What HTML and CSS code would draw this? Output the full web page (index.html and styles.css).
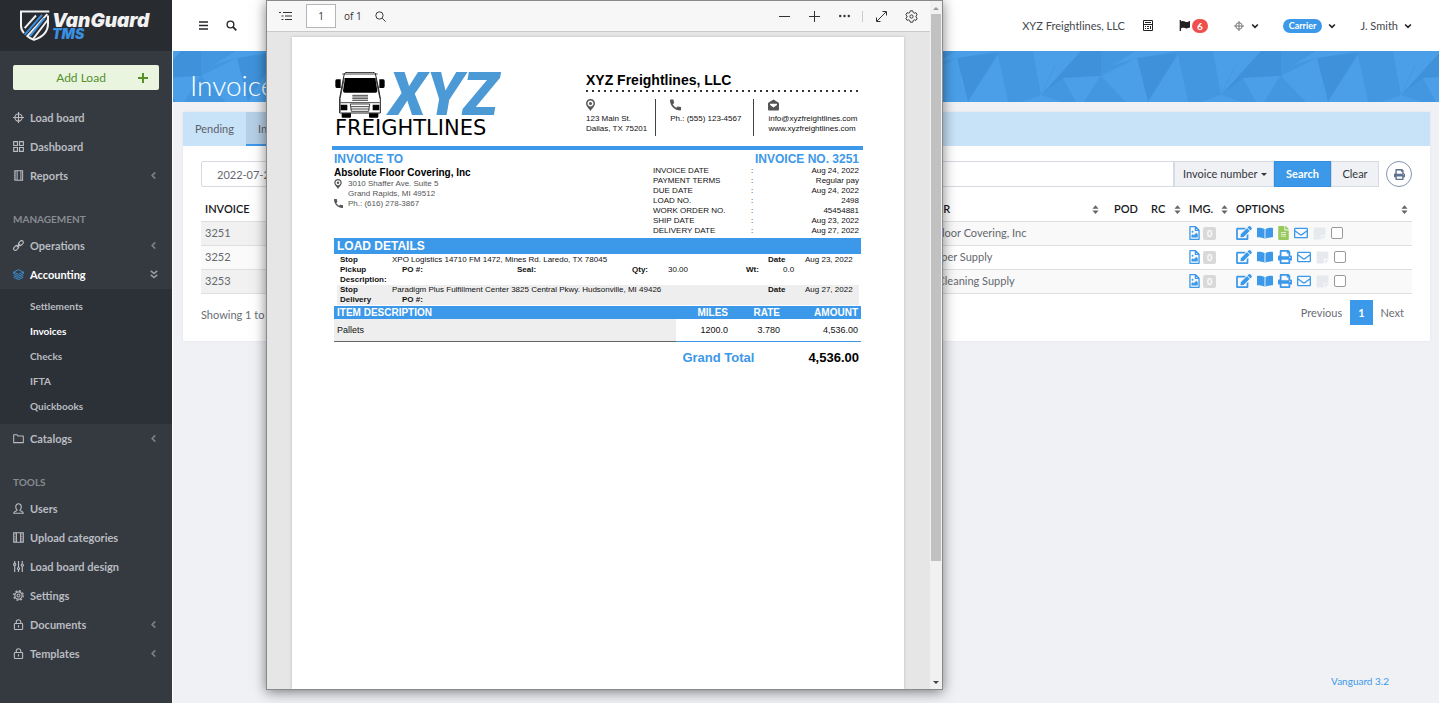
FILE: index.html
```html
<!DOCTYPE html>
<html lang="en">
<head>
<meta charset="utf-8">
<title>VanGuard TMS - Invoices</title>
<link rel="stylesheet" href="styles.css">
</head>
<body>
<svg class="defs" aria-hidden="true">
  <symbol id="target" viewBox="0 0 16 16"><g fill="none" stroke="currentColor" stroke-width="1.6"><circle cx="8" cy="8" r="5.2"/><path d="M8 0v16M0 8h16"/></g></symbol>
  <symbol id="grid" viewBox="0 0 16 16"><path fill="none" stroke="currentColor" stroke-width="1.7" d="M1 1h5.5v5.5H1zM9.5 1H15v5.5H9.500zM1 9.500h5.500V15H1zM9.500 9.500H15V15H9.500z"/></symbol>
  <symbol id="book" viewBox="0 0 16 16"><path fill="none" stroke="currentColor" stroke-width="1.5" d="M3 1h11v14H3zM6 1v14M11.500 1v14"/><path stroke="currentColor" stroke-width="1.300" stroke-dasharray="1.500 1.500" d="M2 1v14"/></symbol>
  <symbol id="link" viewBox="0 0 16 16"><g fill="none" stroke="currentColor" stroke-width="1.700"><rect x="7.500" y="2" width="8" height="5" rx="2.500" transform="rotate(-45 11.500 4.500)"/><rect x=".5" y="9" width="8" height="5" rx="2.500" transform="rotate(-45 4.500 11.500)"/><path d="M5.500 10.500l5-5"/></g></symbol>
  <symbol id="layers" viewBox="0 0 16 16"><path fill="none" stroke="currentColor" stroke-width="1.200" stroke-linejoin="round" d="M8 1l7 3.400-7 3.400-7-3.400zM1 7l7 3.400L15 7M1 9.500l7 3.400 7-3.400M1 12l7 3.400 7-3.400M1 4.400V7M15 4.400V7"/></symbol>
  <symbol id="folder" viewBox="0 0 16 16"><path fill="none" stroke="currentColor" stroke-width="1.500" stroke-linejoin="round" d="M1 14V2.500h5L7.500 4.500H15V14z"/></symbol>
  <symbol id="user" viewBox="0 0 16 16"><path fill="none" stroke="currentColor" stroke-width="1.600" stroke-linejoin="round" d="M6 10.500C4.500 9 4 7.500 4 5.500 4 3 5.500 1 8 1s4 2 4 4.500c0 2-.5 3.500-2 5 0 1.500 5 1 5 4.500H1c0-3.500 5-3 5-4.500z"/></symbol>
  <symbol id="film" viewBox="0 0 16 16"><path fill="none" stroke="currentColor" stroke-width="1.500" d="M1 1h14v14H1zM5 1v14M11 1v14"/><path stroke="currentColor" stroke-width="1.800" stroke-dasharray="1.200 1.300" d="M3 1v14M13 1v14"/></symbol>
  <symbol id="sliders" viewBox="0 0 16 16"><g fill="none" stroke="currentColor" stroke-width="1.700"><path d="M2.500 0v3M2.500 7v9M8 0v9M8 13v3M13.500 0v4M13.500 8v8"/><circle cx="2.500" cy="5" r="1.600"/><circle cx="8" cy="11" r="1.600"/><circle cx="13.500" cy="6" r="1.600"/></g></symbol>
  <symbol id="cog" viewBox="0 0 16 16"><g fill="none" stroke="currentColor"><circle cx="8" cy="8" r="5.300" stroke-width="1.600"/><circle cx="8" cy="8" r="2.200" stroke-width="1.500"/><circle cx="8" cy="8" r="6.900" stroke-width="2" stroke-dasharray="2.700 2.720"/></g></symbol>
  <symbol id="lock" viewBox="0 0 16 16"><g fill="none" stroke="currentColor" stroke-width="1.600"><rect x="2" y="6.500" width="12" height="8.700" rx="1"/><path d="M4.700 6.500V4.300c0-4.300 6.600-4.300 6.600 0v2.200M8 9v3.500"/></g></symbol>
  <symbol id="left" viewBox="0 0 8 10"><path fill="none" stroke="currentColor" stroke-width="1.900" d="M6 1.500L2.500 5 6 8.500"/></symbol>
  <symbol id="down" viewBox="0 0 10 8"><path fill="none" stroke="currentColor" stroke-width="2.200" d="M1.200 2L5 5.800 8.800 2"/></symbol>
  <symbol id="down2" viewBox="0 0 10 12"><path fill="none" stroke="currentColor" stroke-width="2" d="M1 1.500l4 3.300 4-3.300M1 6.500l4 3.300 4-3.300"/></symbol>
  <symbol id="find" viewBox="0 0 16 16"><g fill="none" stroke="currentColor"><circle cx="6.500" cy="6.500" r="4.900" stroke-width="2"/><path stroke-width="2.600" d="M10 10l5 5"/></g></symbol>
  <symbol id="thinfind" viewBox="0 0 16 16"><g fill="none" stroke="currentColor" stroke-width="1.400"><circle cx="6.500" cy="6.500" r="5.300"/><path d="M10.500 10.500l5 5"/></g></symbol>
  <symbol id="calc" viewBox="0 0 10 11"><path fill="none" stroke="currentColor" d="M.5.500h9v10h-9zM0 4.500h10M2 2.500h6"/><path fill="currentColor" d="M2 6h1v1H2zM4 6h2v1H4zM7 6h1v3H7zM2 8h1v1H2zM4 8h2v1H4z"/></symbol>
  <symbol id="flag" viewBox="0 0 16 16"><path fill="currentColor" d="M1 0h2v16H1zM3 2c4-2 6 1 8 1 1.500 0 3-1 5-1.500V11c-2 .8-3.500 1.200-5 1.200-2.500 0-4-2-8-.2z"/></symbol>
  <symbol id="print" viewBox="0 0 512 512"><path fill="currentColor" d="M448 192V77.250c0-8.490-3.370-16.620-9.370-22.630L393.370 9.370c-6-6-14.140-9.370-22.630-9.370H96C78.330 0 64 14.330 64 32v160c-35.350 0-64 28.650-64 64v112c0 8.840 7.160 16 16 16h48v96c0 17.670 14.330 32 32 32h320c17.670 0 32-14.330 32-32v-96h48c8.840 0 16-7.160 16-16V256c0-35.350-28.650-64-64-64zm-64 256H128v-96h256v96zm0-224H128V64h192v48c0 8.840 7.160 16 16 16h48v96zm48 72c-13.250 0-24-10.750-24-24 0-13.260 10.750-24 24-24s24 10.740 24 24c0 13.250-10.750 24-24 24z"/></symbol>
  <symbol id="mail" viewBox="0 0 512 512"><path fill="currentColor" d="M464 64H48C21.490 64 0 85.490 0 112v288c0 26.510 21.490 48 48 48h416c26.510 0 48-21.490 48-48V112c0-26.510-21.490-48-48-48zm0 48v40.805c-22.422 18.259-58.168 46.651-134.587 106.490-16.841 13.247-50.201 45.072-73.413 44.701-23.208.375-56.579-31.459-73.413-44.701C106.180 199.465 70.425 171.067 48 152.805V112h416zM48 400V214.398c22.914 18.251 55.409 43.862 104.938 82.646 21.857 17.205 60.134 55.186 103.062 54.955 42.717.231 80.509-37.199 103.053-54.947 49.528-38.783 82.032-64.401 104.947-82.653V400H48z"/></symbol>
  <symbol id="edit" viewBox="0 0 576 512"><path fill="currentColor" d="M402.600 83.200l90.200 90.200c3.800 3.800 3.800 10 0 13.800L274.400 405.600l-92.800 10.300c-12.400 1.400-22.900-9.100-21.500-21.500l10.300-92.800L388.800 83.200c3.800-3.800 10-3.800 13.800 0zm162-22.900l-48.800-48.800c-15.200-15.200-39.900-15.200-55.200 0l-35.400 35.400c-3.800 3.800-3.800 10 0 13.800l90.200 90.200c3.800 3.800 10 3.800 13.800 0l35.400-35.400c15.200-15.300 15.200-40 0-55.200zM384 346.200V448H64V128h229.800c3.200 0 6.200-1.300 8.500-3.500l40-40c7.600-7.600 2.200-20.500-8.500-20.500H48C21.500 64 0 85.500 0 112v352c0 26.500 21.500 48 48 48h352c26.500 0 48-21.500 48-48V306.200c0-10.700-12.900-16-20.500-8.500l-40 40c-2.200 2.300-3.500 5.300-3.500 8.500z"/></symbol>
  <symbol id="open" viewBox="0 0 18 14"><path fill="currentColor" d="M.8 1C3.500.9 6.500 1.300 8.500 2.500v11C6.500 12.400 3.500 12 .8 11.900c-.5 0-.8-.3-.8-.8V1.800C0 1.300.3 1 .8 1zM17.200 1c-2.700-.1-5.700.3-7.700 1.500v11c2-1.100 5-1.500 7.700-1.600.5 0 .8-.3.8-.8V1.800c0-.5-.3-.8-.8-.8z"/></symbol>
  <symbol id="file" viewBox="0 0 384 512"><path fill="currentColor" d="M224 136V0H24C10.700 0 0 10.700 0 24v464c0 13.300 10.700 24 24 24h336c13.300 0 24-10.700 24-24V160H248c-13.200 0-24-10.800-24-24zm64 236c0 6.600-5.400 12-12 12H108c-6.600 0-12-5.400-12-12v-8c0-6.600 5.400-12 12-12h168c6.600 0 12 5.400 12 12v8zm0-64c0 6.600-5.400 12-12 12H108c-6.600 0-12-5.400-12-12v-8c0-6.600 5.400-12 12-12h168c6.600 0 12 5.400 12 12v8zm0-72v8c0 6.600-5.400 12-12 12H108c-6.600 0-12-5.400-12-12v-8c0-6.600 5.400-12 12-12h168c6.600 0 12 5.400 12 12zm96-114.100v6.100H256V0h6.100c6.400 0 12.500 2.500 17 7l97.900 98c4.500 4.500 7 10.600 7 16.900z"/></symbol>
  <symbol id="image" viewBox="0 0 12 16"><path fill="none" stroke="currentColor" stroke-width="1.500" stroke-linejoin="round" d="M.8.8h6.400l4 4v10.400H.8zM7 .8V5h4.200"/><circle cx="3.800" cy="6.500" r="1.100" fill="currentColor"/><path fill="currentColor" d="M2.500 13v-2.500L4 9.300l1.300 1.200L8 7.800l1.700 1.700V13z"/></symbol>
  <symbol id="note" viewBox="0 0 14 14"><path fill="currentColor" d="M.6.5h12.800v8H9.200c-.4 0-.7.300-.7.700v4.300H.6zM14 9.500L9.500 14V9.500z"/></symbol>
  <symbol id="sort" viewBox="0 0 8 10"><path fill="currentColor" d="M4 0l3.500 4h-7zM4 10L.5 6h7z"/></symbol>
  <symbol id="pin" viewBox="0 0 12 16"><path fill="currentColor" fill-rule="evenodd" d="M6 0c3.400 0 6 2.600 6 5.900C12 9.500 7.500 13 6 16 4.500 13 0 9.500 0 5.900 0 2.600 2.600 0 6 0zm0 2C3.800 2 2 3.700 2 5.900s1.800 4 4 4 4-1.800 4-4S8.200 2 6 2z"/><circle cx="6" cy="5.900" r="2" fill="currentColor"/></symbol>
  <symbol id="phone" viewBox="0 0 16 16"><path fill="currentColor" d="M1 0h4l1 5.200-2 1.800c1 2 3 4 5 5l1.800-2 5.200 1V15c0 .6-.4 1-1 1C7 16 0 9 0 1c0-.6.4-1 1-1z"/></symbol>
  <symbol id="openmail" viewBox="0 0 16 16"><path fill="currentColor" fill-rule="evenodd" d="M8 0l7 4.500c.7.500 1 1 1 1.700V14c0 1-.8 2-2 2H2c-1.200 0-2-1-2-2V6.200c0-.7.300-1.200 1-1.700zM3 6v2l5 3.500L13 8V6z"/></symbol>
</svg>

<div class="shell">
  <aside class="sidebar">
    <div class="brand">
      <svg class="shield" viewBox="0 0 90 92"><g fill="none" stroke="#f2f2f2" stroke-width="6"><path d="M88 4H3v42c0 10 3 17 9 23"/><path d="M84 16v24c0 28-20 42-42 49-8-3-16-7-22-13"/><path d="M82 12L22 78M48 16L14 54M84 28L38 88"/></g><path d="M66 14L14 74M74 24L30 78" stroke="#3b8fe0" stroke-width="6"/></svg>
      <div class="brand-text"><span>VanGuard</span><span class="tms">TMS</span></div>
    </div>
    <button class="add" type="button"><span>Add Load</span><svg viewBox="0 0 10 10"><path stroke="currentColor" stroke-width="2" d="M5 0v10M0 5h10"/></svg></button>
    <nav>
      <a class="item" href="#"><svg><use href="#target"/></svg>Load board</a>
      <a class="item" href="#"><svg><use href="#grid"/></svg>Dashboard</a>
      <a class="item" href="#"><svg><use href="#book"/></svg>Reports<svg class="arrow"><use href="#left"/></svg></a>
      <h2>MANAGEMENT</h2>
      <a class="item" href="#"><svg><use href="#link"/></svg>Operations<svg class="arrow"><use href="#left"/></svg></a>
      <a class="item current" href="#"><svg class="blue"><use href="#layers"/></svg>Accounting<svg class="arrow two"><use href="#down2"/></svg></a>
      <div class="submenu">
        <a href="#">Settlements</a>
        <a class="current" href="#">Invoices</a>
        <a href="#">Checks</a>
        <a href="#">IFTA</a>
        <a href="#">Quickbooks</a>
      </div>
      <a class="item" href="#"><svg><use href="#folder"/></svg>Catalogs<svg class="arrow"><use href="#left"/></svg></a>
      <h2>TOOLS</h2>
      <a class="item" href="#"><svg><use href="#user"/></svg>Users</a>
      <a class="item" href="#"><svg><use href="#film"/></svg>Upload categories</a>
      <a class="item" href="#"><svg><use href="#sliders"/></svg>Load board design</a>
      <a class="item" href="#"><svg><use href="#cog"/></svg>Settings</a>
      <a class="item" href="#"><svg><use href="#lock"/></svg>Documents<svg class="arrow"><use href="#left"/></svg></a>
      <a class="item" href="#"><svg><use href="#lock"/></svg>Templates<svg class="arrow"><use href="#left"/></svg></a>
    </nav>
  </aside>

  <div class="main">
    <header class="topbar">
      <button type="button" class="plain" aria-label="Menu"><svg class="burger" viewBox="0 0 9 9"><path stroke="currentColor" stroke-width="1.500" d="M0 1h9M0 4.500h9M0 8h9"/></svg></button>
      <button type="button" class="plain" aria-label="Search"><svg class="i11"><use href="#find"/></svg></button>
      <div class="account">
        <span>XYZ Freightlines, LLC</span>
        <svg class="calc"><use href="#calc"/></svg>
        <span class="flags"><svg class="i11"><use href="#flag"/></svg><b>6</b></span>
        <span class="menu thin"><svg class="i10"><use href="#target"/></svg><svg class="chev"><use href="#down"/></svg></span>
        <span class="menu"><b class="pill">Carrier</b><svg class="chev"><use href="#down"/></svg></span>
        <span class="menu name">J. Smith<svg class="chev"><use href="#down"/></svg></span>
      </div>
    </header>

    <section class="banner">
      <svg class="facets" aria-hidden="true">
        <defs><pattern id="tri" width="180" height="51" patternUnits="userSpaceOnUse" x="105">
          <path fill="#4297e0" d="M0 0h180v51H0z"/>
          <path fill="#3f92da" d="M139 7l41-5-30 48zM43 44L83 0h20v25l-38 2z"/>
          <path fill="#4a9fe8" d="M0 4l10 47h-10zM180 4v47h-30zM35 0h48L43 44zM65 27l37-2-16 26h-8zM103 25l36-18 11 44h-22zM115 14L138 0h42l-41 7zM23 51l20-7 20 7z"/>
          <path stroke="#4398e1" d="M57 15L43 44"/>
        </pattern></defs>
        <rect width="100%" height="100%" fill="url(#tri)"/>
      </svg>
      <h1>Invoices</h1>
    </section>

    <section class="card">
      <div class="tabs"><a href="#">Pending</a><a class="on" href="#">Invoiced</a></div>
      <div class="body">
        <form class="filters">
          <input class="dates" aria-label="Date range" value="2022-07-25 - 2022-08-24">
          <input class="query" aria-label="Search text">
          <span class="pick"><select aria-label="Search by"><option>Invoice number</option></select></span>
          <button type="button" class="go">Search</button>
          <button type="button" class="clear">Clear</button>
          <button type="button" class="round" aria-label="Print"><svg class="i11"><use href="#print"/></svg></button>
        </form>
        <table class="list">
          <colgroup><col class="c-inv"><col><col class="c-cust"><col class="c-pod"><col class="c-rc"><col class="c-img"><col class="c-opt"></colgroup>
          <thead><tr>
            <th><div>INVOICE<svg><use href="#sort"/></svg></div></th><th></th>
            <th><div>CUSTOMER<svg class="inset"><use href="#sort"/></svg></div></th>
            <th><div>POD</div></th>
            <th><div>RC<svg><use href="#sort"/></svg></div></th>
            <th><div>IMG.<svg><use href="#sort"/></svg></div></th>
            <th><div>OPTIONS<svg><use href="#sort"/></svg></div></th>
          </tr></thead>
          <tbody>
            <tr><td>3251</td><td></td><td>Absolute Floor Covering, Inc</td><td></td><td></td>
              <td><div class="opts tight"><svg class="im"><use href="#image"/></svg><b>0</b></div></td>
              <td><div class="opts"><svg class="w16"><use href="#edit"/></svg><svg class="w16"><use href="#open"/></svg><svg class="w11"><use href="#file"/></svg><svg class="w14"><use href="#mail"/></svg><svg class="note"><use href="#note"/></svg><input type="checkbox" aria-label="Select 3251"></div></td></tr>
            <tr><td>3252</td><td></td><td>Seaside Paper Supply</td><td></td><td></td>
              <td><div class="opts tight"><svg class="im"><use href="#image"/></svg><b>0</b></div></td>
              <td><div class="opts"><svg class="w16"><use href="#edit"/></svg><svg class="w16"><use href="#open"/></svg><svg class="w14"><use href="#print"/></svg><svg class="w14"><use href="#mail"/></svg><svg class="note"><use href="#note"/></svg><input type="checkbox" aria-label="Select 3252"></div></td></tr>
            <tr><td>3253</td><td></td><td>Riverdale Cleaning Supply</td><td></td><td></td>
              <td><div class="opts tight"><svg class="im"><use href="#image"/></svg><b>0</b></div></td>
              <td><div class="opts"><svg class="w16"><use href="#edit"/></svg><svg class="w16"><use href="#open"/></svg><svg class="w14"><use href="#print"/></svg><svg class="w14"><use href="#mail"/></svg><svg class="note"><use href="#note"/></svg><input type="checkbox" aria-label="Select 3253"></div></td></tr>
          </tbody>
        </table>
        <div class="pager"><span>Showing 1 to 3 of 3 entries</span><div><a href="#">Previous</a><a class="on" href="#">1</a><a href="#">Next</a></div></div>
      </div>
    </section>
    <footer><a href="#">Vanguard 3.2</a></footer>
  </div>
</div>

<div class="viewer">
  <div class="pane">
    <div class="tools">
      <svg class="t-list" viewBox="0 0 13 10"><path stroke="currentColor" stroke-width="1.100" d="M0 1.500h2M4 1.500h9M2.500 5h2M6 5h7M2.500 8.500h2M6 8.500h7"/></svg>
      <input class="pageno" aria-label="Page" value="1"><span>of 1</span>
      <svg class="i11"><use href="#thinfind"/></svg>
      <div class="zoomers">
        <svg class="i11" viewBox="0 0 11 11"><path stroke="currentColor" d="M0 5.500h11"/></svg>
        <svg class="i11" viewBox="0 0 11 11"><path stroke="currentColor" d="M0 5.500h11M5.500 0v11"/></svg>
        <svg class="i11" viewBox="0 0 11 11"><g fill="currentColor"><circle cx="1.200" cy="5" r="1.200"/><circle cx="5.500" cy="5" r="1.200"/><circle cx="9.800" cy="5" r="1.200"/></g></svg>
      </div>
      <div class="views">
        <svg class="i11" viewBox="0 0 11 11"><path fill="none" stroke="currentColor" d="M1 10L10 1M6.500.5h4v4M.5 6.500v4h4"/></svg>
        <svg class="i13" viewBox="0 0 16 16"><g fill="none" stroke="currentColor" stroke-width="1.200" stroke-linejoin="round"><path d="M6.500 1h3l.5 2 1.500.9 2-.6 1.500 2.600L13.500 7.300v1.400L15 10.100l-1.500 2.600-2-.6-1.500.9-.5 2h-3L6 13l-1.500-.9-2 .6L1 10.100l1.500-1.400V7.300L1 5.900l1.500-2.600 2 .6L6 3z"/><circle cx="8" cy="8" r="2"/></g></svg>
      </div>
    </div>
    <div class="desk">
      <article class="sheet">
        <div class="head">
          <div class="logo">
            <svg class="truck" viewBox="0 0 150 138"><g fill="#fff" stroke="#222" stroke-width="3"><path d="M28 5q2-4 8-4h77q6 0 8 4l8 36 7 38v44H14V79l7-38z"/></g><g fill="#000"><path d="M20 124h28v10q0 3-3 3H23q-3 0-3-3zM102 124h28v10q0 3-3 3h-22q-3 0-3-3z"/><path d="M30 18h91l6 38q0 6-6 6H30q-6 0-6-6z"/><path d="M5 22h12v26H5q-4 0-4-5V27q0-5 4-5zM133 22h12q4 0 4 5v16q0 5-4 5h-12z"/><path d="M17 98h20v17H17zM113 98h20v17h-20z"/></g><g fill="none" stroke="#222" stroke-width="2.500"><path d="M28 18L15 80v40M122 18l13 62M52 70h47M52 75h47M52 80h47M52 85h47M17 92h117M46 96h58l-3 22H49zM48 104h54M47 111h56M22 6h106"/></g></svg>
            <span class="xyz">XYZ</span>
            <span class="freight">FREIGHTLINES</span>
          </div>
          <div class="company">
            <h2>XYZ Freightlines, LLC</h2>
            <div class="contacts">
              <div><svg class="p9"><use href="#pin"/></svg>123 Main St.<br>Dallas, TX 75201</div>
              <div><svg class="p11"><use href="#phone"/></svg>Ph.: (555) 123-4567</div>
              <div><svg class="p11"><use href="#openmail"/></svg>info@xyzfreightlines.com<br>www.xyzfreightlines.com</div>
            </div>
          </div>
        </div>
        <div class="parties">
          <div>
            <h3>INVOICE TO</h3>
            <h4>Absolute Floor Covering, Inc</h4>
            <div class="addr"><svg class="p8"><use href="#pin"/></svg><span>3010 Shaffer Ave. Suite 5<br>Grand Rapids, MI 49512</span></div>
            <div class="addr"><svg class="p9"><use href="#phone"/></svg><span>Ph.: (616) 278-3867</span></div>
          </div>
          <div class="facts">
            <h3>INVOICE NO. 3251</h3>
            <table>
              <tr><td>INVOICE DATE</td><td>:</td><td>Aug 24, 2022</td></tr>
              <tr><td>PAYMENT TERMS</td><td>:</td><td>Regular pay</td></tr>
              <tr><td>DUE DATE</td><td>:</td><td>Aug 24, 2022</td></tr>
              <tr><td>LOAD NO.</td><td>:</td><td>2498</td></tr>
              <tr><td>WORK ORDER NO.</td><td>:</td><td>45454881</td></tr>
              <tr><td>SHIP DATE</td><td>:</td><td>Aug 23, 2022</td></tr>
              <tr><td>DELIVERY DATE</td><td>:</td><td>Aug 27, 2022</td></tr>
            </table>
          </div>
        </div>
        <h3 class="bar">LOAD DETAILS</h3>
        <div class="stop">
          <div class="where"><b>Stop</b><span>XPO Logistics 14710 FM 1472, Mines Rd. Laredo, TX 78045</span><b>Date</b><span>Aug 23, 2022</span></div>
          <div class="what"><b>Pickup</b><b>PO #:</b><b>Seal:</b><b>Qty:</b><span>30.00</span><b>Wt:</b><span>0.0</span></div>
          <div><b>Description:</b></div>
        </div>
        <div class="stop gray">
          <div class="where"><b>Stop</b><span>Paradigm Plus Fulfillment Center 3825 Central Pkwy. Hudsonville, MI 49426</span><b>Date</b><span>Aug 27, 2022</span></div>
          <div class="what"><b>Delivery</b><b>PO #:</b></div>
        </div>
        <table class="items">
          <thead><tr><th>ITEM DESCRIPTION</th><th>MILES</th><th>RATE</th><th>AMOUNT</th></tr></thead>
          <tbody><tr><td>Pallets</td><td>1200.0</td><td>3.780</td><td>4,536.00</td></tr></tbody>
        </table>
        <div class="total"><span>Grand Total</span><b>4,536.00</b></div>
      </article>
    </div>
  </div>
  <div class="scroll"><i class="up"></i><i class="thumb"></i><i class="dn"></i></div>
</div>
</body>
</html>
```

FILE: styles.css
```css
* { box-sizing: border-box; }
body { margin: 0; background: #eff1f5; font: 11px/18px Lato, "Open Sans", sans-serif; color: #64686e; }
a { color: inherit; text-decoration: none; }
button, input, select { font: inherit; color: inherit; margin: 0; }
h1, h2, h3, h4 { margin: 0; }
svg { display: block; flex: none; }
.defs { position: absolute; width: 0; height: 0; }
.i10 { width: 10px; height: 10px; }
.i11 { width: 11px; height: 11px; }
.i13 { width: 13px; height: 13px; }

.shell { display: flex; min-height: 100vh; }

/* Sidebar */
.sidebar { width: 173px; flex: none; background: #353940; border-right: 1px solid #fff; color: #b9bcc1; }
.brand { height: 51px; background: #282b30; display: flex; align-items: center; gap: 2px; padding-left: 20px; }
.shield { width: 30px; height: 31px; }
.brand-text { display: flex; flex-direction: column; font: italic 900 19px/16px Inter, sans-serif; color: #f2f2f2; }
.brand-text .tms { font-size: 14px; line-height: 10px; color: #3b8fe0; }
.add { display: flex; align-items: center; width: 146px; height: 25px; margin: 14px 13px 13px; padding: 0 11px; border: 0; border-radius: 2px; background: #eaf5e0; color: #55902b; font-size: 12px; }
.add span { flex: 1; }
.add svg { width: 10px; height: 10px; }
.item { display: flex; align-items: center; gap: 6px; height: 29px; padding: 0 13px; font-weight: 700; }
.item svg { width: 11px; height: 11px; }
.item .arrow { width: 7px; height: 9px; margin-left: auto; margin-right: 2px; color: #7c8087; }
.item .arrow.two { width: 8px; height: 11px; color: #9a9da3; margin-right: 1px; }
.item.current { color: #fff; }
.item .blue { color: #3b9bea; }
.sidebar h2 { padding: 17px 13px 0; height: 41px; font-size: 10px; line-height: 24px; color: #888c92; }
.submenu { background: #2c3037; padding: 5px 0 5px 30px; font-size: 10px; font-weight: 700; }
.submenu a { display: block; line-height: 25px; }
.submenu .current { color: #fff; }

/* Top bar */
.main { flex: 1; min-width: 0; display: flex; flex-direction: column; }
.topbar { display: flex; align-items: center; gap: 18px; height: 51px; padding: 0 27px 0 26px; background: #fff; color: #26282c; }
.plain { border: 0; background: none; padding: 0; }
.burger { width: 9px; height: 9px; }
.account { display: flex; align-items: center; margin-left: auto; color: #44484e; }
.account svg { color: #222; }
.calc { width: 10px; height: 11px; margin: 0 26px 0 18px; }
.flags { display: flex; align-items: center; gap: 2px; margin-right: 26px; }
.flags b { padding: 0 5px; border-radius: 7px; background: #f0504d; color: #fff; font-size: 10px; line-height: 14px; }
.menu { display: flex; align-items: center; gap: 6px; margin-right: 24px; }
.menu.name { margin-right: 0; }
.menu.thin { gap: 7px; }
.menu.thin .i10 { color: #777; }
.chev { width: 8px; height: 6px; }
.pill { padding: 0 6px; border-radius: 7px; background: #3c98e8; color: #fff; font-size: 9px; line-height: 14px; }

.banner { display: grid; height: 51px; overflow: hidden; }
.banner > * { grid-area: 1 / 1; }
.facets { width: 100%; height: 51px; }
.banner h1 { padding: 17px 0 0 17px; z-index: 1; color: #fff; font-size: 28px; line-height: 34px; font-weight: 300; }

/* Card */
.card { margin: 10px 9px 0 10px; background: #fff; box-shadow: 0 0 2px #dfe2e8; }
.tabs { display: flex; height: 34px; background: #c8e2f8; line-height: 34px; color: #5d6167; }
.tabs a { padding: 0 12px; }
.tabs .on { background: #b5cfe6; border-bottom: 2px solid #3c98e8; }
.body { padding: 15px 18px 14px; }
.filters { display: flex; height: 26px; }
.filters > * { height: 26px; border: 1px solid #d5dae3; }
.dates { width: 180px; padding: 0 15px; border-radius: 2px; margin-right: 12px; }
.query { flex: 1; min-width: 0; }
.pick { position: relative; background: #eff1f5; color: #33363b; }
.pick select { appearance: none; height: 24px; border: 0; padding: 0 15px 0 8px; background: none; }
.pick::after { content: ""; position: absolute; right: 6px; top: 11px; border: 3px solid transparent; border-top-color: #33363b; }
.filters .go { width: 57px; padding: 0; border-color: #2f8fe2; background: #3c98e8; color: #fff; font-weight: 700; }
.filters .clear { width: 48px; padding: 0; background: #eff1f5; color: #33363b; }
.filters .round { display: flex; align-items: center; justify-content: center; width: 26px; padding: 0; margin-left: 7px; border-radius: 50%; border-color: #8195b0; background: #fff; color: #5d7290; }

.list { width: 100%; margin-top: 11px; table-layout: fixed; border-collapse: collapse; }
.c-inv { width: 76px; }
.c-cust { width: 224px; }
.c-pod { width: 37px; }
.c-rc { width: 38px; }
.c-img { width: 47px; }
.c-opt { width: 180px; }
.list th { height: 23px; padding: 0 4px; font-size: 11px; font-weight: 600; color: #17191c; text-align: left; white-space: nowrap; }
.list th > div { display: flex; align-items: center; justify-content: space-between; }
.list th svg { width: 7px; height: 9px; color: #666; }
.list .inset { margin-right: 7px; }
.list td { height: 24px; padding: 0 4px; border-top: 1px solid #dfdfdf; white-space: nowrap; line-height: 18px; }
.list tbody { border-bottom: 1px solid #dfdfdf; }
.list tbody tr:nth-child(odd) { background: #f9f9f9; }
.list tbody tr td:first-child { background: #fafafa; }
.list tbody tr:nth-child(odd) td:first-child { background: #f1f1f1; }
.opts { display: flex; align-items: center; gap: 5px; color: #3c98e8; }
.opts.tight { gap: 3px; }
.opts b { width: 13px; border-radius: 2px; background: #d9d9d9; color: #fff; font-size: 9px; line-height: 13px; text-align: center; }
.im { width: 11px; height: 14px; }
.w16 { width: 16px; height: 14px; }
.w14 { width: 14px; height: 14px; }
.w11 { width: 11px; height: 14px; color: #97c95c; }
.note { width: 13px; height: 13px; color: #e6eaee; }
.opts input { appearance: none; width: 12px; height: 12px; border: 1px solid #999; border-radius: 2px; background: #fff; }
.pager { display: flex; justify-content: space-between; padding-top: 6px; line-height: 25px; color: #6a6e74; }
.pager > span { padding-top: 2px; }
.pager div { display: flex; height: 26px; }
.pager a { padding: 0 8px; }
.pager .on { height: 25px; background: #3c98e8; color: #fff; font-weight: 700; }
footer { margin-top: auto; padding: 0 50px 13px; text-align: right; font-size: 10px; color: #3c98e8; }

/* PDF window */
.viewer { position: absolute; z-index: 2; left: 266px; top: 0; width: 677px; height: 690px; display: flex; border: 1px solid #8a8a8a; background: #e6e6e6; box-shadow: 0 2px 12px rgba(0, 0, 0, .5); font-family: "Liberation Sans", Arial, sans-serif; color: #111; }
.pane { flex: 1; min-width: 0; display: flex; flex-direction: column; }
.tools { display: flex; align-items: center; height: 31px; padding: 0 12px; background: #f7f7f7; border-bottom: 1px solid #cacaca; font: 10px/14px "Open Sans", sans-serif; color: #333; }
.t-list { width: 13px; height: 10px; }
.pageno { width: 30px; height: 24px; margin: 0 8px 0 14px; padding: 0; border: 1px solid #b5b5b5; background: #fff; text-align: center; }
.tools span { margin-right: 13px; }
.zoomers { display: flex; gap: 19px; margin-left: auto; padding-right: 12px; border-right: 1px solid #ccc; }
.views { display: flex; align-items: center; gap: 18px; padding-left: 13px; }
.desk { flex: 1; min-height: 0; overflow: hidden; padding: 5px 26px 0 25px; }
.sheet { height: 100%; padding: 35px 41px 0 40px; background: #fff; box-shadow: 0 0 3px #bbb; font-size: 8px; line-height: 10px; }
.scroll { display: flex; flex-direction: column; align-items: center; width: 12px; padding: 6px 0 5px; background: #f1f1f1; }
.scroll i { border: 3px solid transparent; }
.scroll .up { border-top: 0; border-bottom-color: #999; }
.scroll .dn { border-bottom: 0; border-top-color: #444; margin-top: auto; }
.scroll .thumb { width: 10px; height: 547px; margin-top: 4px; border: 0; background: #c1c1c1; }

.head { display: flex; justify-content: space-between; height: 74px; }
.logo { display: grid; grid-template-columns: 50px auto; grid-template-rows: 46px 18px; column-gap: 4px; padding-left: 3px; }
.truck { width: 50px; height: 46px; }
.xyz { font: italic 900 60px/46px Roboto, sans-serif; color: #4b99d5; }
.freight { grid-column: 1 / 3; font: 21px/20px "DejaVu Sans", sans-serif; color: #000; }
.company { width: 277px; }
.company h2 { margin-bottom: 2px; font-size: 14px; line-height: 16px; color: #000; }
.contacts { display: flex; margin-right: 4px; padding-top: 9px; background: repeating-linear-gradient(90deg, #333 0 2px, transparent 2px 6px) top / 100% 2px no-repeat; }
.contacts div { height: 37px; padding: 0 8px 0 14px; border-left: 1px solid #444; white-space: nowrap; }
.contacts div:first-child { padding-left: 0; border: 0; }
.contacts div:nth-child(2) { padding-right: 12px; }
.contacts svg, .addr svg { color: #555; margin-bottom: 3px; }
.p8 { width: 8px; height: 10px; }
.p9 { width: 9px; height: 12px; }
.p11 { width: 11px; height: 12px; }
.addr .p9 { height: 9px; }
.parties { display: flex; justify-content: space-between; height: 92px; border-top: 4px solid #3c98e8; padding: 3px 4px 0 2px; }
h3 { font-size: 12px; line-height: 13px; color: #3c98e8; }
h4 { font-size: 10px; line-height: 13px; color: #000; }
.addr { display: flex; gap: 6px; color: #555; }
.addr span { flex: 1; }
.addr .p9 { margin-right: -1px; }
.facts { width: 206px; }
.facts h3 { text-align: right; }
.facts table { width: 100%; border-collapse: collapse; }
.facts td { padding: 0; width: 98px; }
.facts td + td { width: 20px; }
.facts td:last-child { width: auto; text-align: right; }
.bar { margin: 0 2px; padding: 0 3px; background: #3c98e8; color: #fff; line-height: 16px; }
.stop { margin: 1px 4px 0 5px; padding: 0 3px; }
.stop > div { display: grid; min-height: 10px; white-space: nowrap; }
.stop .where { grid-template-columns: 52px 376px 37px auto; justify-content: start; }
.stop .what { grid-template-columns: 62px 115px 115px 36px 78px 37px auto; justify-content: start; }
.stop.gray { margin-top: 0; background: #eee; }
.items { width: 527px; margin: 1px 2px 0; border-collapse: collapse; }
.items th { height: 13px; padding: 0 3px; background: #3c98e8; color: #fff; font-size: 10px; line-height: 13px; text-align: right; }
.items td { height: 22px; padding: 0 3px; border-bottom: 1px solid #3c98e8; font-size: 9px; text-align: right; }
.items th:first-child, .items td:first-child { text-align: left; }
.items td:first-child { background: #eee; border-bottom-color: #666; }
.items th:nth-child(2) { width: 55px; }
.items th:nth-child(3) { width: 52px; }
.items th:nth-child(4) { width: 78px; }
.total { display: flex; justify-content: flex-end; margin-right: 4px; padding-top: 8px; font-size: 13px; line-height: 16px; font-weight: 700; color: #000; }
.total span { color: #3c98e8; margin-right: 54px; }
```
